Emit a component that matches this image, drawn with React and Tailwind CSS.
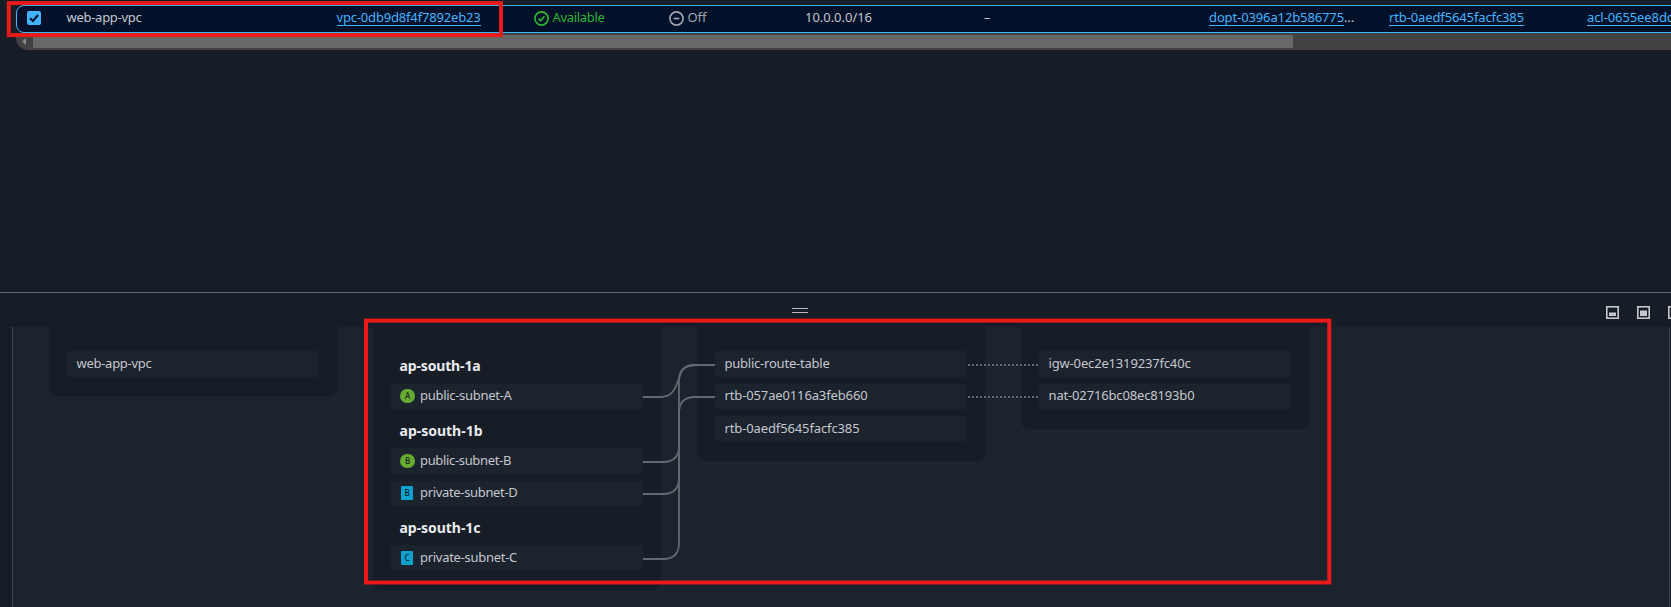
import { useLayoutEffect, useRef, useState } from "react";

// Text run whose tracking is adjusted so that it spans the given width.
function Label({ text, width, className = "" }) {
  const ref = useRef(null);
  const [tracking, setTracking] = useState(0);
  useLayoutEffect(() => {
    const natural = ref.current.getBoundingClientRect().width;
    setTracking((width - natural) / text.length);
  }, [text, width]);
  return (
    <span ref={ref} className={`inline-block whitespace-nowrap ${className}`} style={{ letterSpacing: `${tracking}px` }}>
      {text}
    </span>
  );
}

function Cell({ text, width }) {
  return <Label text={text} width={width} className="relative -top-[2px]" />;
}

function Link({ text, width }) {
  return (
    <a className="relative -top-px flex h-[16px] w-fit items-center border-b border-[#42b4ff] text-[#42b4ff]">
      <Label text={text} width={width} className="relative -top-[0.5px]" />
    </a>
  );
}

function Item({ text, width, badge }) {
  return (
    <div className="flex h-[25.33px] items-center rounded-[2px] bg-[#1b232d] pl-[9.5px]">
      {badge && <Badge {...badge} />}
      <Label text={text} width={width} className="relative -top-px" />
    </div>
  );
}

function Badge({ letter, kind }) {
  return (
    <span className="-ml-[0.5px] mr-[5px] flex w-[15px] justify-center">
      {kind === "public" ? (
        <span className="flex h-[14px] w-[15px] items-center justify-center rounded-full bg-[#67ac30] text-[8px] font-medium text-[#161d26]">{letter}</span>
      ) : (
        <span className="mr-px flex h-[14px] w-[12px] items-center justify-center rounded-[1px] bg-[#0aa3d0] text-[8px] font-medium text-[#161d26]">{letter}</span>
      )}
    </span>
  );
}

function Zone({ text, width }) {
  return (
    <h3 className="flex h-[25.33px] items-center pl-[8.5px] text-[14px] font-bold text-[#ebebf0]">
      <Label text={text} width={width} className="relative top-[2.4px]" />
    </h3>
  );
}

function Column({ children }) {
  return (
    <section className="flex w-[288px] flex-col gap-[7px] rounded-b-[8px] bg-[#161d26] px-[18px] pt-[24.2px] pb-[19.9px]">
      {children}
    </section>
  );
}

export default function App() {
  return (
    <main className="relative flex h-[607px] w-[1671px] flex-col overflow-hidden bg-[#161d26] font-['Noto_Sans','Open_Sans',sans-serif] text-[13px] leading-[16px] text-[#c6c6cd]">
      <div className="h-[292px] pt-[5px] pl-[16px]">
        <div className="flex h-[28px] w-[1680px] items-center rounded-l-[8px] border border-[#42b4ff] bg-[#001129]">
          <span className="relative -top-px ml-[10px] flex h-[14px] w-[14px] shrink-0 items-center justify-center rounded-[2px] bg-[#42b4ff]">
            <svg viewBox="0 0 14 14" className="h-[14px] w-[14px]" fill="none" stroke="#001129" strokeWidth="2">
              <path d="M3 7.2 6 10l5-6" />
            </svg>
          </span>
          <div className="ml-[25.5px] w-[270px] shrink-0"><Cell text="web-app-vpc" width={75} /></div>
          <div className="w-[197px] shrink-0"><Link text="vpc-0db9d8f4f7892eb23" width={144} /></div>
          <div className="flex w-[135px] shrink-0 items-center gap-[4px] text-[#2bb534]">
            <svg viewBox="0 0 16 16" className="relative -top-px h-[15px] w-[15px]" fill="none" stroke="currentColor" strokeWidth="1.8">
              <circle cx="8" cy="8" r="7" />
              <path d="m4.8 8.2 2.2 2.2 4.2-4.6" />
            </svg>
            <Cell text="Available" width={52} />
          </div>
          <div className="flex w-[136.5px] shrink-0 items-center gap-[4px] text-[#a4a4ad]">
            <svg viewBox="0 0 16 16" className="relative -top-px h-[15px] w-[15px]" fill="none" stroke="currentColor" strokeWidth="1.8">
              <circle cx="8" cy="8" r="7" />
              <path d="M5 8h6" />
            </svg>
            <Cell text="Off" width={19} />
          </div>
          <div className="w-[179px] shrink-0"><Cell text="10.0.0.0/16" width={67} /></div>
          <div className="w-[225px] shrink-0"><Cell text="–" width={8} /></div>
          <div className="flex w-[180px] shrink-0 items-center"><Link text="dopt-0396a12b586775" width={135} /><Cell text="…" width={13} /></div>
          <div className="w-[198px] shrink-0"><Link text="rtb-0aedf5645facfc385" width={135} /></div>
          <Link text="acl-0655ee8dc" width={86} />
        </div>
        <div className="flex h-[17px] items-center rounded-bl-[12px] bg-[#424242]">
          <svg viewBox="0 0 17 13" className="h-[13px] w-[17px]" fill="#8b8b8b"><path d="M10 3v7L6 6.5z" /></svg>
          <div className="h-[13px] w-[1260px] bg-[#686868]" />
        </div>
      </div>

      <div className="flex h-[35px] items-start border-t border-[#656871]">
        <div className="mt-[15px] ml-[792px] h-[5px] w-[16px] shrink-0 border-y border-[#b4b7bf]" />
        <div className="mt-[13px] ml-[798px] flex shrink-0 gap-[18px]">
          {["M3 6.5h7V10H3z", "M3 4.5h7V10H3z", "M5 4h5v6H5z"].map((d) => (
            <svg key={d} viewBox="0 0 13 13" className="h-[13px] w-[13px] shrink-0" fill="none" stroke="#c6c6cd" strokeWidth="1.6">
              <rect x="0.8" y="0.8" width="11.4" height="11.4" />
              <path d={d} fill="#c6c6cd" stroke="none" />
            </svg>
          ))}
        </div>
      </div>

      <div className="flex h-[280px] items-start pl-[12px]">
        <div className="flex h-[280px] w-[1658px] items-start gap-[36px] border-x border-[#424650] bg-[#1b232d] pl-[36px]">
          <Column>
            <Item text="web-app-vpc" width={75} />
          </Column>
          <Column>
            <Zone text="ap-south-1a" width={81} />
            <Item text="public-subnet-A" width={91.5} badge={{ letter: "A", kind: "public" }} />
            <Zone text="ap-south-1b" width={83} />
            <Item text="public-subnet-B" width={91} badge={{ letter: "B", kind: "public" }} />
            <Item text="private-subnet-D" width={97.5} badge={{ letter: "B", kind: "private" }} />
            <Zone text="ap-south-1c" width={81} />
            <Item text="private-subnet-C" width={97} badge={{ letter: "C", kind: "private" }} />
          </Column>
          <Column>
            <Item text="public-route-table" width={105} />
            <Item text="rtb-057ae0116a3feb660" width={143} />
            <Item text="rtb-0aedf5645facfc385" width={135} />
          </Column>
          <Column>
            <Item text="igw-0ec2e1319237fc40c" width={142} />
            <Item text="nat-02716bc08ec8193b0" width={146} />
          </Column>
        </div>
      </div>

      <svg className="pointer-events-none absolute inset-0" width="1671" height="607" fill="none">
        <g stroke="#656871" strokeWidth="1.8">
          <path d="M643 397H661C671 397 675 390 678 381S682 365 697 365H715" />
          <path d="M643 462H663Q679 462 679 446V381Q679 365 695 365H715" />
          <path d="M643 494H663Q679 494 679 478V413Q679 397 695 397H715" />
          <path d="M643 559H663Q679 559 679 543V413" />
          <path d="M968 365H1039M968 397H1039" strokeDasharray="2 2" />
        </g>
        <g stroke="#e81a1a" strokeWidth="4">
          <rect x="8.8" y="3.1" width="492.2" height="32" />
          <rect x="366" y="320.6" width="963.3" height="261.9" />
        </g>
      </svg>
    </main>
  );
}
